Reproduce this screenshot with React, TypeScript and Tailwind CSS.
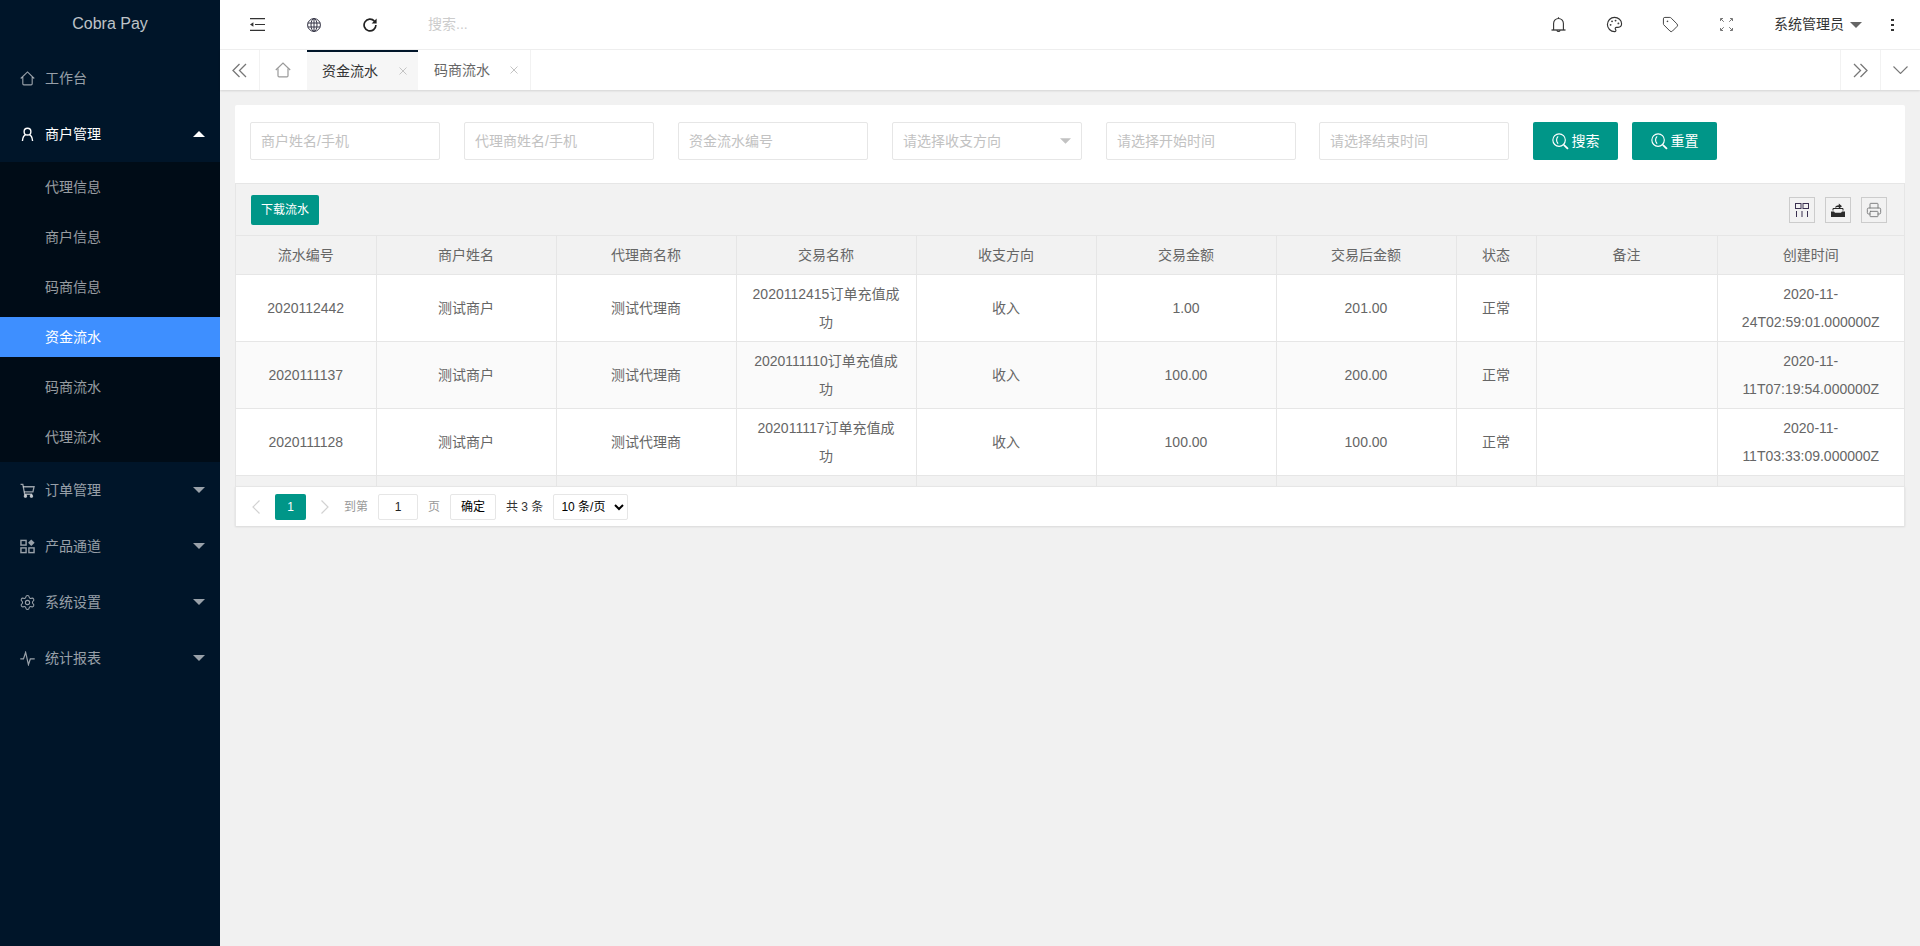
import { Palette, Printer, Settings, Tag } from "lucide-react";

const House = ({ className }: { className?: string }) => (
  <svg viewBox="0 0 16 16" fill="none" stroke="currentColor" strokeWidth="1.2" className={className}>
    <path d="M.8 8 8 1l7.2 7" />
    <path d="M3 6.5v7.2c0 .7.4 1.1 1.1 1.1h7.8c.7 0 1.1-.4 1.1-1.1V6.5" />
  </svg>
);

const UserIcon = ({ className }: { className?: string }) => (
  <svg viewBox="0 0 16 16" fill="none" stroke="currentColor" strokeWidth="1.5" className={className}>
    <circle cx="8" cy="5" r="3.6" />
    <path d="M2.6 15c.3-3.600 1.800-6.200 3.400-6.800M13.400 15c-.3-3.600-1.800-6.200-3.400-6.800" />
  </svg>
);

const CartIcon = ({ className }: { className?: string }) => (
  <svg viewBox="0 0 16 16" fill="none" stroke="currentColor" strokeWidth="1.4" className={className}>
    <path d="M.6 1.500h2.400l2 10.500h8" />
    <path d="M3.400 4H15l-1.200 5.500H4.400" />
    <circle cx="5.800" cy="14" r="1.200" fill="currentColor" />
    <circle cx="12.200" cy="14" r="1.200" fill="currentColor" />
  </svg>
);

const AppIcon = ({ className }: { className?: string }) => (
  <svg viewBox="0 0 16 16" fill="none" stroke="currentColor" strokeWidth="1.5" className={className}>
    <rect x="1" y="1.500" width="5.500" height="5" />
    <rect x="1" y="9.500" width="5.500" height="5" />
    <rect x="9.500" y="9.500" width="5.500" height="5" />
    <path d="M12 .6 15.600 4 12 7.400 8.600 4Z" fill="currentColor" stroke="none" />
  </svg>
);

const PulseIcon = ({ className }: { className?: string }) => (
  <svg viewBox="0 0 16 16" fill="none" stroke="currentColor" strokeWidth="1.3" className={className}>
    <path d="M.3 8.500h3.400L6 1.500l3 13 2-6h4.700" />
  </svg>
);

const Caret = ({ up, className }: { up?: boolean; className?: string }) => (
  <svg viewBox="0 0 12 6" fill="currentColor" className={className}>
    <path d={up ? "M6 0l6 6H0z" : "M0 0h12L6 6z"} />
  </svg>
);

const SearchIcon = () => (
  <svg viewBox="0 0 18 18" fill="none" stroke="currentColor" strokeWidth="1.2" className="w-[17px] h-[17px]">
    <circle cx="7.500" cy="7.500" r="6.600" />
    <path d="M12.500 12.500l4.400 4.400" strokeWidth="1.900" />
    <path d="M6.500 3.600C4.300 5.600 4.300 9.400 6.500 11.400" />
  </svg>
);

const DoubleArrow = ({ right }: { right?: boolean }) => (
  <svg viewBox="0 0 15 15" fill="none" stroke="#777" strokeWidth="1.3" className={"w-[15px] h-[15px]" + (right ? " rotate-180" : "")}>
    <path d="M7.500 1 1 7.500 7.500 14M14 1 7.500 7.500 14 14" />
  </svg>
);

const Close = () => (
  <svg viewBox="0 0 8 8" stroke="#c4c4c4" strokeWidth="1" className="w-[8px] h-[8px]">
    <path d="M.5.5l7 7M7.500.5l-7 7" />
  </svg>
);

const menuAfter = [
  { label: "订单管理", icon: <CartIcon className="w-[15px] h-[15px]" /> },
  { label: "产品通道", icon: <AppIcon className="w-[15px] h-[15px]" /> },
  { label: "系统设置", icon: <Settings size={17} strokeWidth={1.5} className="-mx-[1px]" /> },
  { label: "统计报表", icon: <PulseIcon className="w-[15px] h-[15px]" /> },
];

const subMenu = ["代理信息", "商户信息", "码商信息", "资金流水", "码商流水", "代理流水"];

const columns = ["流水编号", "商户姓名", "代理商名称", "交易名称", "收支方向", "交易金额", "交易后金额", "状态", "备注", "创建时间"];

const rows = [
  ["2020112442", "测试商户", "测试代理商", "2020112415订单充值成功", "收入", "1.00", "201.00", "正常", "", "2020-11-24T02:59:01.000000Z"],
  ["2020111137", "测试商户", "测试代理商", "2020111110订单充值成功", "收入", "100.00", "200.00", "正常", "", "2020-11-11T07:19:54.000000Z"],
  ["2020111128", "测试商户", "测试代理商", "202011117订单充值成功", "收入", "100.00", "100.00", "正常", "", "2020-11-11T03:33:09.000000Z"],
];

const filters = ["商户姓名/手机", "代理商姓名/手机", "资金流水编号"];

function Sidebar() {
  return (
    <aside className="w-[220px] shrink-0 bg-[#001529] flex flex-col text-[14px]">
      <div className="h-[50px] flex items-center justify-center text-[16px] text-white/75 pb-[2px]">Cobra Pay</div>
      <div className="h-[56px] flex items-center pl-[20px] text-white/60">
        <House className="w-[15px] h-[15px]" />
        <span className="ml-[10px]">工作台</span>
      </div>
      <div className="h-[56px] flex items-center pl-[20px] pr-[15px] text-white">
        <UserIcon className="w-[15px] h-[15px]" />
        <span className="ml-[10px] flex-1">商户管理</span>
        <Caret up className="w-[12px] h-[6px]" />
      </div>
      <div className="bg-[#000c17] h-[300px] flex flex-col">
        {subMenu.map((m) => (
          <div
            key={m}
            className={
              "h-[40px] my-[5px] pl-[45px] flex items-center " +
              (m === "资金流水" ? "bg-[#3e8fff] text-white" : "text-white/60")
            }
          >
            {m}
          </div>
        ))}
      </div>
      {menuAfter.map((m) => (
        <div key={m.label} className="h-[56px] flex items-center pl-[20px] pr-[15px] text-white/60">
          {m.icon}
          <span className="ml-[10px] flex-1">{m.label}</span>
          <Caret className="w-[12px] h-[6px]" />
        </div>
      ))}
    </aside>
  );
}

function TopBar() {
  return (
    <header className="h-[50px] shrink-0 bg-white border-b border-[#f0f0f0] flex items-center text-[#333]">
      <div className="ml-[30px] w-[15px] flex">
        <svg viewBox="0 0 15 13" fill="currentColor" className="w-[15px] h-[13px]">
          <path d="M0 0h15v1.200H0zM5 5.900h10v1.200H5zM0 11.800h15V13H0zM3.400 4.200v4.600L0 6.500z" />
        </svg>
      </div>
      <div className="ml-[42px] w-[14px] flex">
        <svg viewBox="0 0 14 14" fill="none" stroke="#334" strokeWidth="1" className="w-[14px] h-[14px]">
          <circle cx="7" cy="7" r="6.400" />
          <ellipse cx="7" cy="7" rx="3" ry="6.400" />
          <path d="M.8 5h12.400M.8 9h12.400M7 .6v12.800" />
        </svg>
      </div>
      <div className="ml-[42px] w-[14px] flex">
        <svg viewBox="0 0 14 14" fill="none" stroke="#222" strokeWidth="1.700" className="w-[14px] h-[14px]">
          <path d="M11.400 3.100A5.900 5.900 0 1 0 12.900 7" />
          <path d="M13.600.4v5h-5z" fill="#222" stroke="none" />
        </svg>
      </div>
      <span className="ml-[51px] text-[14px] text-[#cccccc]">搜索...</span>
      <div className="flex-1" />
      <div className="w-[56px] flex justify-center">
        <svg viewBox="0 0 15 16" fill="none" stroke="#333" strokeWidth="1.100" className="w-[15px] h-[16px]">
          <path d="M2.600 13V6.400a4.900 4.900 0 0 1 9.800 0V13" />
          <path d="M.5 13h14" strokeWidth="1.300" />
          <path d="M5.800 13.300a1.800 1.800 0 0 0 3.400 0M7.500 .2v1.200" />
        </svg>
      </div>
      <div className="w-[56px] flex justify-center">
        <Palette size={17} strokeWidth={1.6} color="#333" />
      </div>
      <div className="w-[56px] flex justify-center">
        <Tag size={17} strokeWidth={1.4} color="#444" />
      </div>
      <div className="w-[56px] flex justify-center">
        <svg viewBox="0 0 13 13" fill="none" stroke="#777" strokeWidth="1" className="w-[13px] h-[13px]">
          <path d="M.5 3V.5H3M.8.8l3 3M12.500 3V.5H10M12.200.8l-3 3M.5 10v2.500H3M.8 12.200l3-3M12.500 10v2.500H10M12.200 12.200l-3-3" />
        </svg>
      </div>
      <span className="ml-[20px] text-[14px] text-[#333]">系统管理员</span>
      <Caret className="ml-[6px] w-[12px] h-[6px] text-[#666]" />
      <div className="ml-[29px] mr-[26px] w-[3px] flex flex-col gap-[3px]">
        <span className="w-[3px] h-[2px] bg-[#333]" />
        <span className="w-[3px] h-[2px] bg-[#333]" />
        <span className="w-[3px] h-[2px] bg-[#333]" />
      </div>
    </header>
  );
}

function TabBar() {
  return (
    <div className="h-[40px] shrink-0 bg-white flex items-stretch text-[14px] shadow-[0_1px_2px_rgba(0,0,0,0.12)] relative">
      <div className="w-[40px] border-r border-[#f2f2f2] flex items-center justify-center">
        <DoubleArrow />
      </div>
      <div className="w-[47px] pr-[2px] flex items-center justify-center text-[#999]">
        <House className="w-[16px] h-[16px]" />
      </div>
      <div className="w-[111px] bg-[#f6f6f6] border-t-[2px] border-[#001529] flex items-center justify-between pl-[15px] pr-[11px] text-[#333]">
        <span>资金流水</span>
        <Close />
      </div>
      <div className="w-[113px] border-r border-[#f2f2f2] flex items-center justify-between pl-[16px] pr-[12px] text-[#666]">
        <span>码商流水</span>
        <Close />
      </div>
      <div className="flex-1" />
      <div className="w-[40px] border-l border-[#f2f2f2] flex items-center justify-center">
        <DoubleArrow right />
      </div>
      <div className="w-[40px] border-l border-[#f2f2f2] flex items-center justify-center">
        <svg viewBox="0 0 15 8" fill="none" stroke="#777" strokeWidth="1.100" className="w-[15px] h-[8px]">
          <path d="M.5.5l7 7 7-7" />
        </svg>
      </div>
    </div>
  );
}

function FilterCard() {
  return (
    <div className="h-[78px] bg-white rounded-t-[2px] pl-[15px] pt-[17px] flex items-start gap-x-[24px]">
      {filters.map((p) => (
        <input
          key={p}
          placeholder={p}
          className="w-[190px] h-[38px] border border-[#e6e6e6] rounded-[2px] pl-[10px] text-[14px] placeholder:text-[#c2c2c2] outline-none"
        />
      ))}
      <div className="w-[190px] h-[38px] border border-[#e6e6e6] rounded-[2px] pl-[10px] pr-[10px] flex items-center justify-between text-[14px] text-[#c2c2c2]">
        <span>请选择收支方向</span>
        <Caret className="w-[11px] h-[6px]" />
      </div>
      <input
        placeholder="请选择开始时间"
        className="w-[190px] h-[38px] border border-[#e6e6e6] rounded-[2px] pl-[10px] text-[14px] placeholder:text-[#c2c2c2] outline-none"
      />
      <input
        placeholder="请选择结束时间"
        className="-ml-[1px] w-[190px] h-[38px] border border-[#e6e6e6] rounded-[2px] pl-[10px] text-[14px] placeholder:text-[#c2c2c2] outline-none"
      />
      <div className="flex gap-x-[14px]">
        <button className="w-[85px] h-[38px] bg-[#009688] rounded-[2px] text-white text-[14px] flex items-center justify-center gap-x-[3px]">
          <SearchIcon />
          搜索
        </button>
        <button className="w-[85px] h-[38px] bg-[#009688] rounded-[2px] text-white text-[14px] flex items-center justify-center gap-x-[3px]">
          <SearchIcon />
          重置
        </button>
      </div>
    </div>
  );
}

function Toolbar() {
  return (
    <div className="h-[52px] bg-[#f2f2f2] border-t border-x border-[#e6e6e6] flex items-center justify-between pl-[15px] pr-[17px]">
      <button className="w-[68px] h-[30px] bg-[#009688] rounded-[2px] text-white text-[12px]">下载流水</button>
      <div className="flex gap-x-[10px]">
        <div className="w-[26px] h-[26px] border border-[#ccc] flex items-center justify-center">
          <svg viewBox="0 0 14 14" fill="none" stroke="#3a3050" strokeWidth="1" className="w-[14px] h-[14px]">
            <rect x=".5" y=".5" width="5.500" height="5" />
            <rect x="8" y=".5" width="5.500" height="5" />
            <path d="M1.500 8v6M7 8v6M12.500 8v6" />
          </svg>
        </div>
        <div className="w-[26px] h-[26px] border border-[#ccc] flex items-center justify-center">
          <svg viewBox="0 0 14 14" className="w-[14px] h-[14px]">
            <path d="M0 8.500h3l1 1.200h6l1-1.200h3V14H0z" fill="#2b2b2b" />
            <path d="M2 7.500V5.500h10v2" fill="none" stroke="#2b2b2b" />
            <path d="M4 5c.3-1.800 1.500-2.700 3.800-2.700V.5L11 3.200 7.800 5.800V4C6 4 4.800 4.300 4 5z" fill="#2b2b2b" />
          </svg>
        </div>
        <div className="w-[26px] h-[26px] border border-[#ccc] flex items-center justify-center text-[#77787a]">
          <Printer size={16} strokeWidth={1.4} />
        </div>
      </div>
    </div>
  );
}

function DataTable() {
  return (
    <div className="border-x border-[#e6e6e6]">
      <table className="w-[1668px] table-fixed border-collapse text-[14px] text-[#666] text-center">
        <colgroup>
          <col className="w-[140px]" />
          <col className="w-[180px]" />
          <col className="w-[180px]" />
          <col className="w-[180px]" />
          <col className="w-[180px]" />
          <col className="w-[180px]" />
          <col className="w-[180px]" />
          <col className="w-[80px]" />
          <col className="w-[181px]" />
          <col className="w-[187px]" />
        </colgroup>
        <thead>
          <tr className="h-[39px] bg-[#f2f2f2]">
            {columns.map((c) => (
              <th key={c} className="font-normal border border-[#e6e6e6] first:border-l-0 last:border-r-0">
                {c}
              </th>
            ))}
          </tr>
        </thead>
        <tbody>
          {rows.map((r, i) => (
            <tr key={r[0]} className={"h-[67px] " + (i === 1 ? "bg-[#fafafa]" : "bg-white")}>
              {r.map((v, j) => (
                <td key={j} className="px-[15px] py-[5px] leading-[28px] border border-[#e6e6e6] first:border-l-0 last:border-r-0">
                  {v}
                </td>
              ))}
            </tr>
          ))}
          <tr className="h-[10px] bg-[#f2f2f2]">
            {columns.map((c) => (
              <td key={c} className="border-x border-[#e6e6e6] first:border-l-0 last:border-r-0" />
            ))}
          </tr>
        </tbody>
      </table>
    </div>
  );
}

function Pager() {
  return (
    <div className="h-[40px] bg-white border-x border-t border-[#e6e6e6] shadow-[0_1px_2px_rgba(0,0,0,0.1)] flex items-center pl-[12px] pt-[1px] text-[12px] text-[#999]">
      <div className="w-[16px] flex justify-center">
        <svg viewBox="0 0 8 14" fill="none" stroke="#d2d2d2" strokeWidth="1.200" className="w-[8px] h-[14px]">
          <path d="M7.500.5 1 7l6.500 6.500" />
        </svg>
      </div>
      <div className="ml-[11px] w-[31px] h-[26px] bg-[#009688] rounded-[2px] text-white flex items-center justify-center">1</div>
      <div className="ml-[10px] w-[17px] flex justify-center">
        <svg viewBox="0 0 8 14" fill="none" stroke="#d2d2d2" strokeWidth="1.200" className="w-[8px] h-[14px]">
          <path d="M.5.5 7 7 .5 13.500" />
        </svg>
      </div>
      <span className="ml-[11px]">到第</span>
      <div className="ml-[10px] w-[40px] h-[26px] border border-[#e6e6e6] rounded-[2px] text-[#222] flex items-center justify-center">1</div>
      <span className="ml-[10px]">页</span>
      <button className="ml-[10px] w-[46px] h-[26px] border border-[#e6e6e6] rounded-[2px] bg-white text-black pt-[1px]">确定</button>
      <span className="ml-[10px] text-[#333]">共 3 条</span>
      <select className="ml-[10px] w-[75px] h-[26px] pl-[3px] border border-[#e6e6e6] rounded-[2px] bg-white text-black text-[12px] outline-none">
        <option>10 条/页</option>
        <option>20 条/页</option>
      </select>
    </div>
  );
}

export default function App() {
  return (
    <div className="flex w-full h-screen overflow-hidden [font-family:'Liberation_Sans','Noto_Sans_CJK_SC',sans-serif]">
      <Sidebar />
      <main className="flex-1 min-w-0 flex flex-col bg-[#f1f1f1]">
        <TopBar />
        <TabBar />
        <div className="flex-1 p-[15px]">
          <FilterCard />
          <Toolbar />
          <DataTable />
          <Pager />
        </div>
      </main>
    </div>
  );
}
